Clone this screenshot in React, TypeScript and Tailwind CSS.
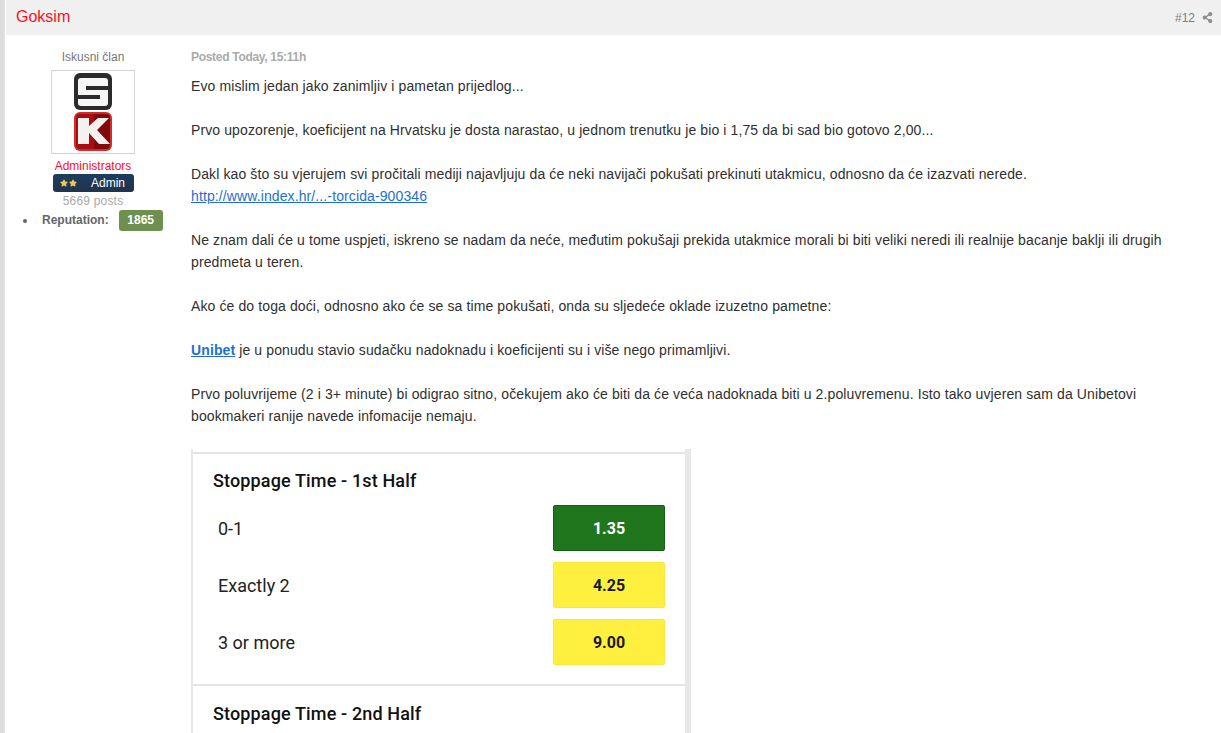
import React from "react";
import { FaShareAlt, FaStar } from "react-icons/fa";

const Odds = ({ value, green }: { value: string; green?: boolean }) => (
  <div
    className={`w-[112px] h-[46px] pt-[1px] rounded-[2px] flex items-center justify-center text-[16px] font-bold ${
      green
        ? "bg-[#1f761d] border border-[#165c14] text-white"
        : "bg-[#ffef3e] border border-[#f7e83a] text-[#1a1a2e]"
    }`}
  >
    {value}
  </div>
);

const OddsRow = ({ label, value, green }: { label: string; value: string; green?: boolean }) => (
  <div className="flex items-center justify-between h-[46px] mb-[11px] pl-[5px]">
    <span className="text-[18px] text-[#222]">{label}</span>
    <Odds value={value} green={green} />
  </div>
);

const Logo = () => (
  <svg width="38" height="78" viewBox="0 0 38 78">
    {/* top tile */}
    <rect x="0" y="0" width="38" height="37" rx="6" fill="#2b2b2b" />
    <rect x="4" y="5" width="30" height="28" rx="3" fill="#f6f6f6" />
    <rect x="12" y="13" width="22" height="4" fill="#2b2b2b" />
    <rect x="4" y="22" width="22" height="4" fill="#2b2b2b" />
    {/* bottom tile */}
    <rect x="0" y="39" width="38" height="39" rx="6" fill="#d32a2a" />
    <rect x="2" y="41" width="34" height="35" rx="4" fill="#a50f12" />
    <path d="M20 41h12a4 4 0 0 1 4 4v27a4 4 0 0 1-4 4H20z" fill="#7f0a0d" />
    <path d="M4 45H15V53L24 45H35L23 57L36 71H25L15 60V71H4Z" fill="#f5f1f1" />
  </svg>
);

export default function App() {
  return (
    <div className="w-[1221px] h-[733px] overflow-hidden flex bg-white font-['Liberation_Sans',Arial,sans-serif] text-[13px] text-[#333]">
      <div className="w-[5px] bg-[#dcdcdc] border-r border-[#e4e4e4] shrink-0" />
      <div className="w-[1216px] ml-[1px] flex flex-col">
        <div className="h-[35px] bg-[#f0f0f0] flex items-center justify-between pl-[10px] pr-[8px] shrink-0">
          <span className="text-[16px] text-[#ff0e1f] -mt-[1px]">Goksim</span>
          <span className="flex items-center gap-[7px] text-[12px] text-[#7a7f87]">
            #12
            <FaShareAlt className="w-[11px] h-[11px] text-[#8d8d8d]" />
          </span>
        </div>
        <div className="flex flex-1 min-h-0">
          <aside className="w-[185px] shrink-0 flex flex-col items-center text-[12px] leading-[15px] pl-[2px] pt-[15px] pr-[13px]">
            <div className="text-[#777]">Iskusni član</div>
            <div className="w-[84px] h-[84px] mt-[5px] border border-[#d5d5d5] flex items-center justify-center bg-white">
              <Logo />
            </div>
            <div className="text-[#ff0e1f] mt-[5px]">Administrators</div>
            <div className="w-[81px] h-[18px] ml-[1px] rounded-[3px] bg-gradient-to-b from-[#1d3d5e] to-[#20344d] flex items-center text-white text-[12px] pl-[7px]">
              <FaStar className="w-[8px] h-[8px] text-[#f3c94b]" />
              <FaStar className="w-[8px] h-[8px] text-[#f3c94b] ml-[1px]" />
              <span className="ml-[14px]">Admin</span>
            </div>
            <div className="text-[#aaa] mt-[2px] tracking-[0.2px]">5669 posts</div>
            <div className="w-full flex items-center mt-[1px] pl-[15px]">
              <span className="w-[4px] h-[4px] rounded-full bg-[#666]" />
              <span className="ml-[15px] font-bold text-[#666]">Reputation:</span>
              <span className="ml-[10px] w-[44px] h-[21px] rounded-[3px] bg-[#6f8f50] text-white font-bold flex items-center justify-center">
                1865
              </span>
            </div>
          </aside>
          <main className="flex-1 min-w-0 pr-[40px]">
            <div className="text-[12px] font-bold tracking-[-0.3px] text-[#aaa] leading-[15px] pt-[15px]">Posted Today, 15:11h</div>
            <div className="text-[14px] leading-[22px] tracking-[0.11px] text-[#2f2f2f] mt-[10px]">
              <p>Evo mislim jedan jako zanimljiv i pametan prijedlog...</p>
              <p className="mt-[22px]">
                Prvo upozorenje, koeficijent na Hrvatsku je dosta narastao, u jednom trenutku je bio i 1,75 da bi sad bio gotovo 2,00...
              </p>
              <p className="mt-[22px]">
                Dakl kao što su vjerujem svi pročitali mediji najavljuju da će neki navijači pokušati prekinuti utakmicu, odnosno da će izazvati nerede.
                <br />
                <a className="text-[#1f6fd1] underline">http://www.index.hr/...-torcida-900346</a>
              </p>
              <p className="mt-[22px]">
                Ne znam dali će u tome uspjeti, iskreno se nadam da neće, međutim pokušaji prekida utakmice morali bi biti veliki neredi ili realnije bacanje baklji ili drugih predmeta u teren.
              </p>
              <p className="mt-[22px]">
                Ako će do toga doći, odnosno ako će se sa time pokušati, onda su sljedeće oklade izuzetno pametne:
              </p>
              <p className="mt-[22px]">
                <a className="text-[#1f6fd1] underline font-bold">Unibet</a> je u ponudu stavio sudačku nadoknadu i koeficijenti su i više nego primamljivi.
              </p>
              <p className="mt-[22px]">
                Prvo poluvrijeme (2 i 3+ minute) bi odigrao sitno, očekujem ako će biti da će veća nadoknada biti u 2.poluvremenu. Isto tako uvjeren sam da Unibetovi bookmakeri ranije navede infomacije nemaju.
              </p>
            </div>
            <div className="w-[500px] mt-[22px] flex font-['Roboto',sans-serif]">
              <div className="w-[2px] bg-[#e8e8e8]" />
              <div className="flex-1 pt-[3px]">
                <div className="border-t-2 border-[#e4e4e4]">
                  <div className="pt-[15px] pl-[20px] pr-[20px] pb-[8px] border-b-2 border-[#e4e4e4]">
                    <div className="text-[18px] font-medium tracking-[0.14px] text-[#111] leading-[24px] mb-[12px]">Stoppage Time - 1st Half</div>
                    <OddsRow label="0-1" value="1.35" green />
                    <OddsRow label="Exactly 2" value="4.25" />
                    <OddsRow label="3 or more" value="9.00" />
                  </div>
                  <div className="pt-[16px] pl-[20px] pr-[20px] h-[120px]">
                    <div className="text-[18px] font-medium tracking-[0.14px] text-[#111] leading-[24px]">Stoppage Time - 2nd Half</div>
                  </div>
                </div>
              </div>
              <div className="w-[6px] bg-[#e8e8e8]" />
            </div>
          </main>
        </div>
      </div>
    </div>
  );
}
